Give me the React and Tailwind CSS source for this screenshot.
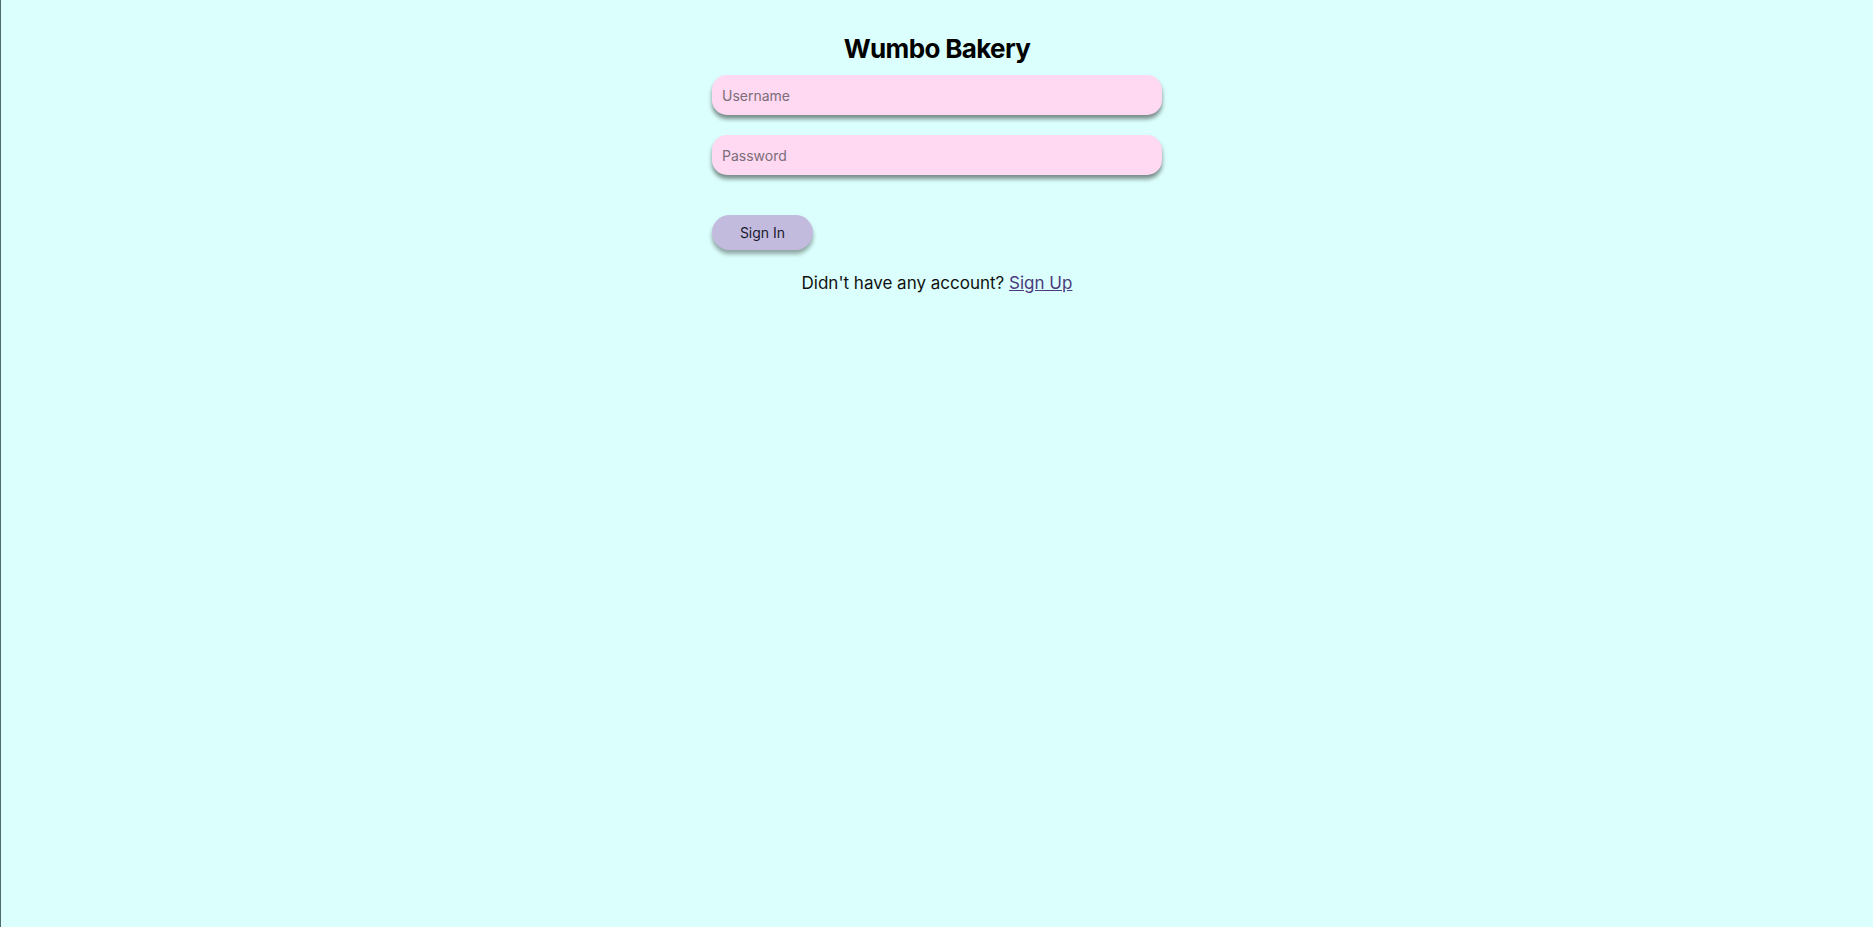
import React, { useState } from "react";

export default function App() {
  const [form, setForm] = useState({ username: "", password: "" });

  const handleChange = (e) => {
    setForm({ ...form, [e.target.name]: e.target.value });
  };

  return (
    <div
      className="min-h-screen bg-[#dbfffc] border-l border-[#4f6b6b] flex flex-col items-center pt-[29px]"
      style={{ fontFamily: "Inter, 'Noto Sans', sans-serif" }}
    >
      {/* Title */}
      <h1 className="text-[26px] leading-[40px] font-bold text-black tracking-tight">Wumbo Bakery</h1>

      {/* Form */}
      <div className="w-[450px] flex flex-col items-start mt-[6px]">
        <input
          name="username"
          value={form.username}
          onChange={handleChange}
          placeholder="Username"
          className="w-full h-[40px] rounded-[15px] bg-[#ffd8f2] px-[10px] text-[14px] text-black placeholder:text-[#7a6e78] outline-none shadow-[0_4px_4px_rgba(0,0,0,0.45)]"
        />
        <input
          name="password"
          type="password"
          value={form.password}
          onChange={handleChange}
          placeholder="Password"
          className="w-full h-[40px] mt-[20px] rounded-[15px] bg-[#ffd8f2] px-[10px] text-[14px] text-black placeholder:text-[#7a6e78] outline-none shadow-[0_4px_4px_rgba(0,0,0,0.45)]"
        />

        {/* Button */}
        <button className="mt-[40px] w-[101px] h-[35px] rounded-[18px] bg-[#c3bbde] text-[14px] text-[#1a1a2e] shadow-[0_4px_4px_rgba(0,0,0,0.35)]">
          Sign In
        </button>
      </div>

      {/* Footer */}
      <p className="mt-[21px] text-[17px] text-[#111]">
        Didn't have any account?{" "}
        <a href="#" className="text-[#4b3a7c] underline">Sign Up</a>
      </p>
    </div>
  );
}
